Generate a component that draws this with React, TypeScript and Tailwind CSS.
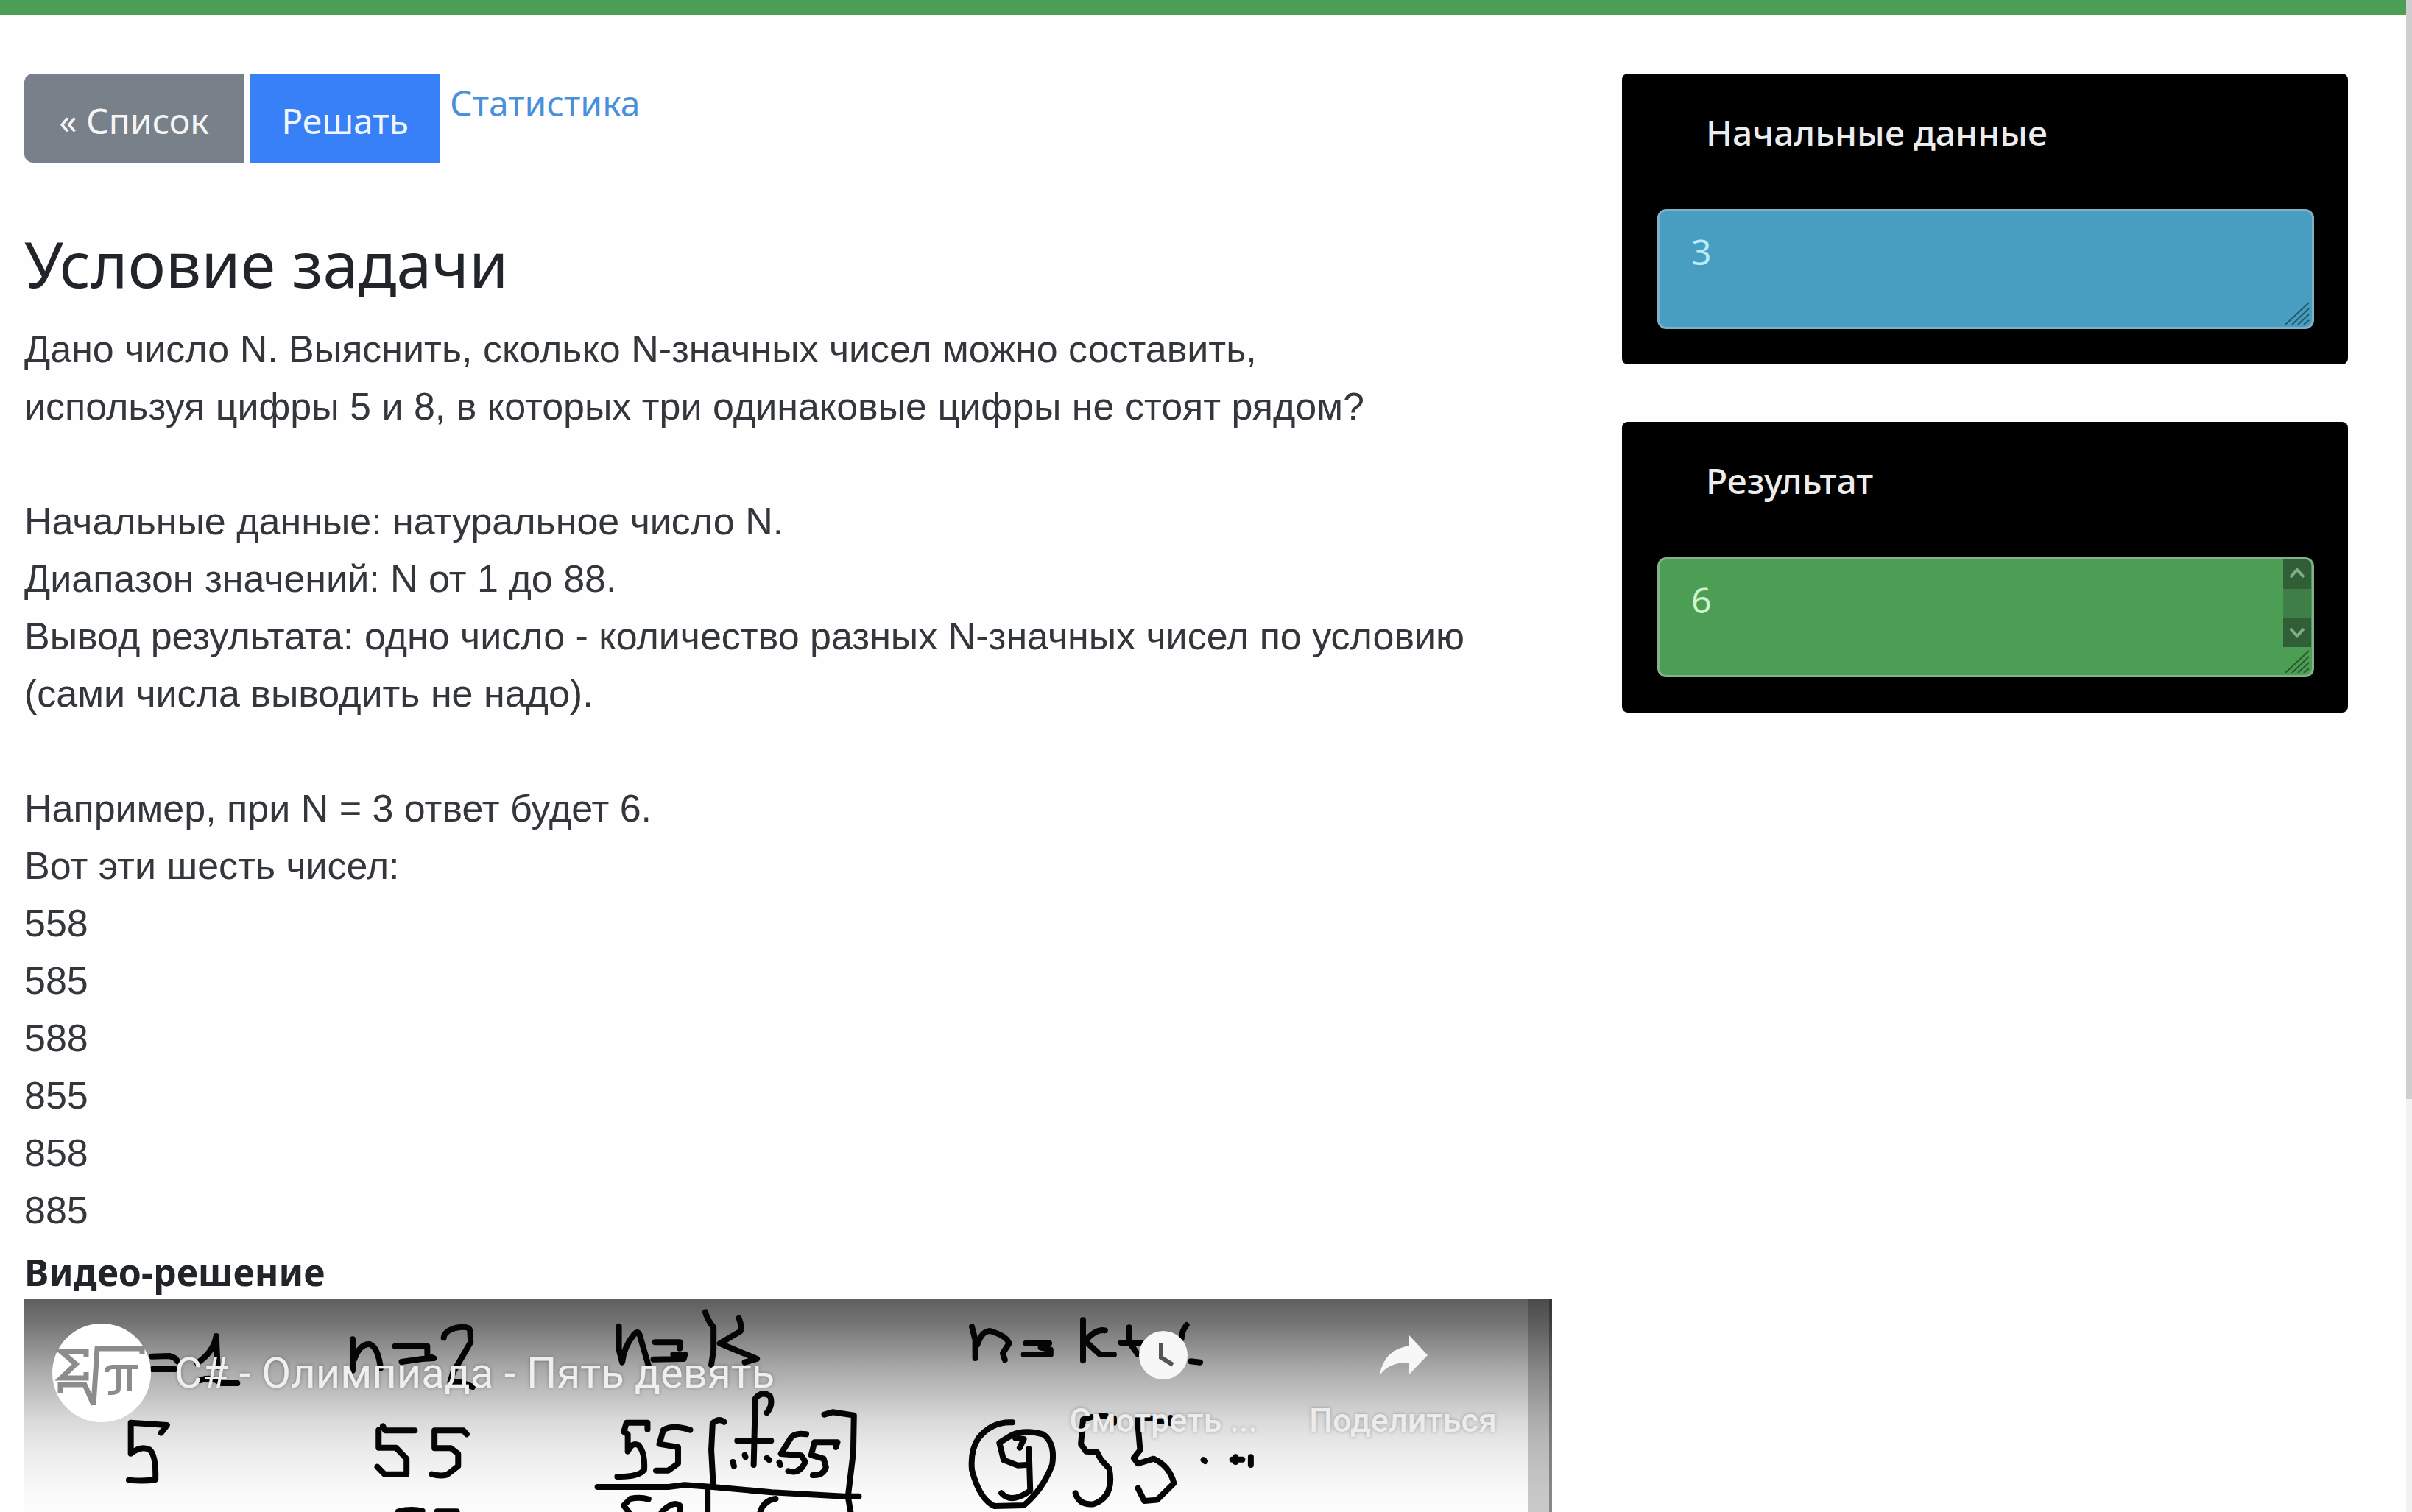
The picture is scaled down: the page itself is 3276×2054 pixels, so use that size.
import type { ReactNode } from "react";

const statement = `Дано число N. Выяснить, сколько N-значных чисел можно составить,
используя цифры 5 и 8, в которых три одинаковые цифры не стоят рядом?

Начальные данные: натуральное число N.
Диапазон значений: N от 1 до 88.
Вывод результата: одно число - количество разных N-значных чисел по условию
(сами числа выводить не надо).

Например, при N = 3 ответ будет 6.
Вот эти шесть чисел:
558
585
588
855
858
885`;

// Pen strokes on the whiteboard, grouped by the area they were drawn in.
const strokesLeft = [
  "M462 488 L515 486 Q535 492 540 508 M464 540 H532",
  "M600 515 Q650 470 658 405 L662 530 M610 585 Q640 570 665 590 M675 597 H722",
  "M1073 418 V545 M1078 500 Q1095 435 1125 438 Q1150 450 1158 535",
  "M1202 446 H1300 V475 M1222 510 L1285 498 L1320 495 L1300 485",
  "M1350 412 Q1352 385 1385 372 Q1430 360 1430 385 L1432 430 L1378 555 L1370 592 H1400 L1438 612",
  "M490 800 L508 768 L398 758 V884 Q430 850 455 868 Q475 890 473 990 Q440 998 392 992",
  "M1165 772 L1172 790 H1262 M1152 788 V860 H1205 L1237 905 V968 H1170 L1148 938",
  "M1420 805 L1410 790 H1322 V862 H1372 L1394 885 V935 L1360 970 Q1340 978 1314 968",
  "M1212 1120 Q1250 1108 1285 1118 M1330 1120 H1390",
];

const strokesMiddle = [
  "M315 185 V280 L325 332 Q330 270 360 220 Q372 200 378 220 L405 345",
  "M425 250 H500 V275 M420 320 L512 318 L516 300 L480 300",
  "M578 127 Q582 155 603 190 V280 L596 342",
  "M680 152 Q690 185 685 205 L622 255 L735 318 L698 332",
  "M402 605 V578 H338 L330 615 L342 625 V695 Q355 655 375 670 Q395 700 392 770 Q375 800 310 798",
  "M532 608 Q480 585 450 608 L438 665 L495 678 V745 L465 773 H428",
  "M635 575 Q620 558 600 580 L596 690 L602 835",
  "M765 538 Q785 505 775 470 Q750 445 730 480 L725 750 M675 652 H778",
  "M662 738 L665 755 M698 710 L700 718 M765 722 L772 730 M803 740 L806 750",
  "M885 625 Q850 618 838 640 L808 705 L870 712 L882 738 Q865 790 830 775",
  "M975 678 L980 658 H910 L900 710 L938 725 L945 760 Q935 795 905 792",
  "M940 545 L965 535 L1030 548 L1028 700 L1012 880 L1020 942",
  "M250 840 H465 L515 832 L600 840 L780 862 L1000 878 H1045",
  "M585 845 V942 M330 915 L350 888 Q380 880 405 890 M332 920 L345 942 M445 942 Q480 895 500 915 V942",
  "M745 942 Q755 895 792 888",
];

const strokesRight = [
  "M122 187 L130 240 V315 M135 260 Q145 205 165 204 Q205 225 210 255 L195 295 L200 322",
  "M250 254 H305 M245 300 H308 V280 L285 272",
  "M385 160 V325 M437 202 Q415 195 390 245 L425 300 H458",
  "M494 190 V250 L515 300 M475 252 H530 M630 180 Q618 205 618 235 M640 328 L662 332",
  "M218 577 Q170 572 138 640 Q118 690 122 770 Q140 890 175 918 L245 915 Q290 850 312 750 Q320 660 290 625 Q245 605 215 630 L187 660 L197 730 L230 752 L252 750",
  "M225 640 L245 645 L235 680 M257 685 L260 855 Q215 910 192 865",
  "M405 555 L385 565 L380 665 L392 695 L418 698 L428 730 L447 765 Q460 880 410 910 Q375 915 367 865",
  "M425 552 H440 M458 560 V578 M515 555 V580 M530 560 H545 M565 572 H580 M592 558 V580",
  "M515 590 L520 690 L505 722 L515 745 L552 725 Q590 755 600 825 L560 893 L530 897 L515 845",
  "M670 730 L674 735 M738 728 H762 M746 718 V738 M782 718 V750",
];

function Whiteboard() {
  const groups = [
    { t: "translate(0 1680) scale(.4464 .3333)", d: strokesLeft },
    { t: "translate(700 1740) scale(.4464 .3333)", d: strokesMiddle },
    { t: "translate(1250 1740) scale(.574 .3333)", d: strokesRight },
  ];
  return (
    <svg
      className="absolute left-0 top-0 h-[290px] w-[2075px]"
      viewBox="33 1764 2075 290"
      fill="none"
      stroke="#050505"
      strokeWidth="8"
      strokeLinecap="round"
      strokeLinejoin="round"
      aria-hidden="true"
    >
      {groups.map((g) => (
        <g key={g.t} transform={g.t}>
          {g.d.map((d) => (
            <path key={d} d={d} vectorEffect="non-scaling-stroke" />
          ))}
        </g>
      ))}
    </svg>
  );
}

function ChannelLogo() {
  return (
    <svg className="size-[134px] shrink-0" viewBox="0 0 134 134" aria-hidden="true">
      <circle cx="67" cy="67" r="67" fill="#fff" />
      <g fill="none" stroke="#8c8c8c" strokeWidth="7">
        <path d="M46 46 V38 H12 L32 55 L12 74 H46 V66" />
        <path d="M11 94 V83 H44 L56 110 L61 34 H122 V42" />
        <path d="M74 66 Q74 59 82 59 H116 M90 60 V88 Q90 95 76 94 M105 60 V92" strokeWidth="6" />
      </g>
    </svg>
  );
}

function PlayerButton({ label, children }: { label: string; children: ReactNode }) {
  return (
    <button
      type="button"
      className="flex flex-col items-center gap-[26px] text-[45px] leading-[60px] font-medium text-[#ececec] [text-shadow:0_0_5px_rgba(0,0,0,0.3)]"
    >
      {children}
      {label}
    </button>
  );
}

function Player() {
  return (
    <section
      aria-label="Видео"
      className="relative aspect-video w-full overflow-hidden bg-white font-['Roboto',sans-serif]"
    >
      <div className="absolute inset-y-0 right-0 w-[33px] border-r-4 border-[#8a8a8a] bg-[#cbcbcb]" />
      <div className="absolute inset-x-0 top-0 h-[290px] bg-[linear-gradient(to_bottom,rgba(0,0,0,0.63)_0px,rgba(0,0,0,0.55)_32px,rgba(0,0,0,0.44)_65px,rgba(0,0,0,0.33)_98px,rgba(0,0,0,0.24)_132px,rgba(0,0,0,0.15)_165px,rgba(0,0,0,0.09)_198px,rgba(0,0,0,0.05)_232px,rgba(0,0,0,0.02)_265px,rgba(0,0,0,0.01)_290px)]" />
      <Whiteboard />
      <div className="relative flex items-start justify-between pt-[34px] pr-[75px] pl-[38px]">
        <div className="flex items-center gap-8">
          <ChannelLogo />
          <a
            href="#video"
            className="text-[58px] leading-[72px] text-[#f0efed] [text-shadow:0_0_5px_rgba(0,0,0,0.3)]"
          >
            C# - Олимпиада - Пять девять
          </a>
        </div>
        <div className="flex gap-[70px] pt-2.5">
          <PlayerButton label="Смотреть ...">
            <svg className="size-[66px]" viewBox="0 0 66 66" aria-hidden="true">
              <circle cx="33" cy="33" r="33" fill="#f7f7f7" />
              <path d="M30 16 V36 L46 46" fill="none" stroke="#555" strokeWidth="6" />
            </svg>
          </PlayerButton>
          <PlayerButton label="Поделиться">
            <svg className="size-[66px]" viewBox="0 0 66 66" aria-hidden="true">
              <path d="M41 6 L66 33 L41 59 V43 Q14 42 1 60 Q6 26 41 20 Z" fill="#f7f7f7" />
            </svg>
          </PlayerButton>
        </div>
      </div>
    </section>
  );
}

function Grip() {
  return (
    <svg
      className="pointer-events-none absolute right-1.5 bottom-1.5 h-8 w-9"
      viewBox="0 0 36 32"
      fill="none"
      stroke="#000"
      strokeOpacity="0.45"
      strokeWidth="2"
      aria-hidden="true"
    >
      <path d="M3 32 L35 2 M12 32 L35 10 M20 32 L35 18 M28 32 L35 26" />
    </svg>
  );
}

function DataCard({
  id,
  title,
  value,
  tone,
  children,
}: {
  id: string;
  title: string;
  value: string;
  tone: string;
  children?: ReactNode;
}) {
  return (
    <div className="rounded-lg bg-black pt-[41px] pr-[46px] pb-12 pl-12">
      <label htmlFor={id} className="block pl-[66px] text-[48px] leading-[78px] font-medium text-[#ececec]">
        {title}
      </label>
      <div className="relative mt-[65px]">
        <textarea
          id={id}
          defaultValue={value}
          className={`block h-[163px] w-full resize-none overflow-hidden rounded-xl border-[3px] px-[43px] py-4 text-[48px] leading-[78px] outline-none ${tone}`}
        />
        {children}
        <Grip />
      </div>
    </div>
  );
}

function MiniScroll() {
  return (
    <div className="absolute top-[3px] right-1 flex h-[119px] w-[38px] flex-col justify-between overflow-hidden rounded-tr-lg bg-[#3f7f47]">
      {["M10 24 L19 14 L28 24", "M10 15 L19 25 L28 15"].map((d, i) => (
        <button
          key={d}
          type="button"
          aria-label={i ? "Вниз" : "Вверх"}
          className="h-10 w-full bg-[#305f37]"
        >
          <svg className="size-full" viewBox="0 0 38 40" fill="none" stroke="#7fae86" strokeWidth="4" aria-hidden="true">
            <path d={d} />
          </svg>
        </button>
      ))}
    </div>
  );
}

export default function App() {
  return (
    <div className="flex h-screen overflow-hidden bg-[#fefefe] font-['Noto_Sans',sans-serif] text-[#212529]">
      <div className="flex min-w-0 grow flex-col">
        <header className="h-[21px] shrink-0 bg-[#4d9e55]" />
        <main className="grid grid-cols-[2075fr_986fr] gap-x-[95px] pt-[79px] pr-[79px] pl-[33px]">
          <div className="min-w-0">
            <nav className="flex items-start text-[48px] leading-[80px]">
              <a
                href="#list"
                className="mr-[9px] flex h-[121px] w-[298px] items-center justify-center rounded-l-xl bg-[#78818a] pt-1.5 text-[#f5f5f5]"
              >
                « Список
              </a>
              <a
                href="#solve"
                className="flex h-[121px] w-[257px] items-center justify-center bg-[#3880f8] pt-1.5 text-[#eef6ff]"
              >
                Решать
              </a>
              <a href="#stats" className="ml-3.5 text-[#4a8fdc]">
                Статистика
              </a>
            </nav>
            <h1 className="mt-[82px] text-[86px] leading-[110px]">Условие задачи</h1>
            <p className="mt-[22px] font-['Liberation_Sans',sans-serif] text-[52px] leading-[78px] whitespace-pre-line text-[#33373b]">
              {statement}
            </p>
            <h2 className="mt-[9px] text-[50px] leading-[72px] font-bold">Видео-решение</h2>
            <Player />
          </div>
          <aside className="flex flex-col gap-[78px]">
            <DataCard
              id="input-data"
              title="Начальные данные"
              value="3"
              tone="border-[#7fb0c6] bg-[#489ec1] text-[#b9ecfb]"
            />
            <DataCard
              id="result"
              title="Результат"
              value="6"
              tone="border-[#86b08d] bg-[#4d9e55] text-[#cdf5cf]"
            >
              <MiniScroll />
            </DataCard>
          </aside>
        </main>
      </div>
      <div className="w-2 shrink-0 bg-[#f1f1f1]">
        <div className="h-[1493px] bg-[#cfcfcf]" />
      </div>
    </div>
  );
}
